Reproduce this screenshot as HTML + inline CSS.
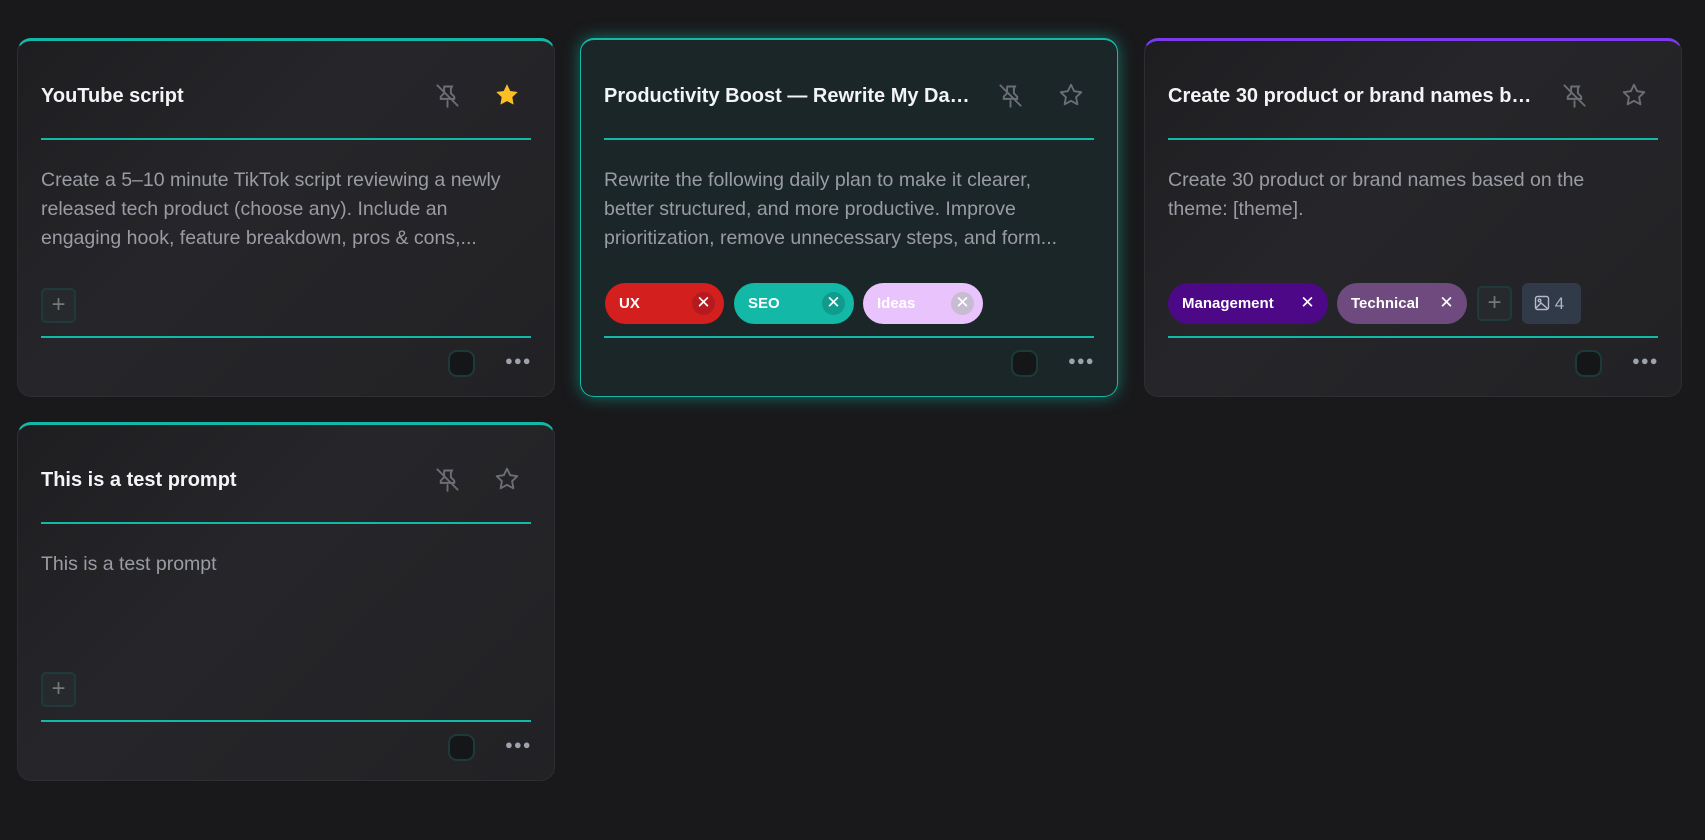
<!DOCTYPE html>
<html><head><meta charset="utf-8"><style>
*{box-sizing:border-box;margin:0;padding:0}
body{width:1705px;height:840px;background:#19191b;font-family:"Liberation Sans",sans-serif;position:relative;overflow:hidden}
.card{position:absolute;width:538px;height:359px;border-radius:14px;background:linear-gradient(135deg,#1e1e21 0%,#26262a 40%,#222225 100%);border:1px solid #2a2f31;border-top:3px solid #14b8a6}
.card.sel{background:#1a2628;border:1px solid #14b8a6;box-shadow:0 0 16px rgba(20,184,166,.55)}
.card.pur{border-top-color:#7c3aed}
.title{position:absolute;left:23px;top:44px;font-size:20px;font-weight:bold;color:#f3f4f6;width:370px;white-space:nowrap;overflow:hidden;text-overflow:ellipsis}
.pin{position:absolute;top:83px}
.hr{position:absolute;left:23px;right:23px;height:2px;background:#14b8a6}
.desc{position:absolute;left:23px;top:125px;width:470px;font-size:19.5px;line-height:29px;color:#9a9ca3}
.plus{position:absolute;width:35px;height:35px;border:2px solid #1f3a3b;border-radius:5px;background:#262a2d;color:#777;font-size:24px;line-height:29px;text-align:center;font-weight:300}
.chk{position:absolute;width:27px;height:27px;border:2px solid #1d3a3b;border-radius:9px;background:#141618}
.dots{position:absolute;color:#9ca3af;font-size:13px;letter-spacing:1px;font-weight:bold}
.tag{position:absolute;height:41px;border-radius:21px;color:#fff;font-size:15px;font-weight:bold;line-height:41px;padding-left:14px}
.tag .x{position:absolute;right:9px;top:9px;width:23px;height:23px;border-radius:50%;text-align:center;line-height:22px;font-weight:normal;font-size:17px}
</style></head><body>

<!-- Card 1 -->
<div class="card" style="left:17px;top:38px">
  <div class="title" style="top:44px">YouTube script</div>
  <svg class="pin" style="left:416px;top:41px" width="27" height="27" viewBox="0 0 24 24" fill="none" stroke="#6b6f75" stroke-width="1.7" stroke-linecap="round"><path d="M3 3l18 18M12 17v5M9 4h7l-1 2v4l3 3v2H6v-2l3-3V5"/></svg>
  <svg style="position:absolute;left:476px;top:41px" width="26" height="26" viewBox="0 0 24 24"><path d="M12 2l3 6.3 6.9.9-5 4.8 1.2 6.9L12 17.6 5.9 20.9 7.1 14l-5-4.8 6.9-.9z" fill="#fbbf24"/></svg>
  <div class="hr" style="top:97px"></div>
  <div class="desc">Create a 5–10 minute TikTok script reviewing a newly released tech product (choose any). Include an engaging hook, feature breakdown, pros &amp; cons,...</div>
  <div class="plus" style="left:23px;top:247px">+</div>
  <div class="hr" style="top:295px"></div>
  <div class="chk" style="left:430px;top:309px"></div>
  <div class="dots" style="left:487px;top:312px">●●●</div>
</div>

<!-- Card 2 -->
<div class="card sel" style="left:580px;top:38px;border-top:2px solid #14b8a6">
  <div class="title" style="top:45px">Productivity Boost — Rewrite My Daily Plan</div>
  <svg class="pin" style="left:416px;top:42px" width="27" height="27" viewBox="0 0 24 24" fill="none" stroke="#6b6f75" stroke-width="1.7" stroke-linecap="round"><path d="M3 3l18 18M12 17v5M9 4h7l-1 2v4l3 3v2H6v-2l3-3V5"/></svg>
  <svg style="position:absolute;left:477px;top:42px" width="26" height="26" viewBox="0 0 24 24" fill="none" stroke="#6b6f75" stroke-width="1.7" stroke-linejoin="round"><path d="M12 2.5l2.9 6 6.6.9-4.8 4.6 1.2 6.6L12 17.4 6.1 20.6l1.2-6.6-4.8-4.6 6.6-.9z"/></svg>
  <div class="hr" style="top:98px"></div>
  <div class="desc" style="top:126px">Rewrite the following daily plan to make it clearer, better structured, and more productive. Improve prioritization, remove unnecessary steps, and form...</div>
  <div class="tag" style="left:24px;top:243px;width:119px;background:#d41f1f">UX<span class="x" style="background:#b51a1e">✕</span></div>
  <div class="tag" style="left:153px;top:243px;width:120px;background:#14b8a6">SEO<span class="x" style="background:#109b8d">✕</span></div>
  <div class="tag" style="left:282px;top:243px;width:120px;background:#e9c3fb">Ideas<span class="x" style="background:#c7bcd2">✕</span></div>
  <div class="hr" style="top:296px"></div>
  <div class="chk" style="left:430px;top:310px"></div>
  <div class="dots" style="left:487px;top:313px">●●●</div>
</div>

<!-- Card 3 -->
<div class="card pur" style="left:1144px;top:38px">
  <div class="title" style="top:44px">Create 30 product or brand names based on the theme</div>
  <svg class="pin" style="left:416px;top:41px" width="27" height="27" viewBox="0 0 24 24" fill="none" stroke="#6b6f75" stroke-width="1.7" stroke-linecap="round"><path d="M3 3l18 18M12 17v5M9 4h7l-1 2v4l3 3v2H6v-2l3-3V5"/></svg>
  <svg style="position:absolute;left:476px;top:41px" width="26" height="26" viewBox="0 0 24 24" fill="none" stroke="#6b6f75" stroke-width="1.7" stroke-linejoin="round"><path d="M12 2.5l2.9 6 6.6.9-4.8 4.6 1.2 6.6L12 17.4 6.1 20.6l1.2-6.6-4.8-4.6 6.6-.9z"/></svg>
  <div class="hr" style="top:97px"></div>
  <div class="desc">Create 30 product or brand names based on the theme: [theme].</div>
  <div class="tag" style="left:23px;top:242px;width:160px;background:#4c0886">Management<span class="x">✕</span></div>
  <div class="tag" style="left:192px;top:242px;width:130px;background:#6e4a7e">Technical<span class="x">✕</span></div>
  <div class="plus" style="left:332px;top:245px">+</div>
  <div style="position:absolute;left:377px;top:242px;width:59px;height:41px;border-radius:6px;background:#303a48;color:#b0b6c0;font-size:17px;line-height:41px;padding-left:12px">
    <svg style="vertical-align:-2px" width="16" height="16" viewBox="0 0 16 16" fill="none" stroke="#b6b9c8" stroke-width="1.4"><rect x="1.5" y="1.5" width="13" height="13" rx="2"/><circle cx="5.5" cy="5.5" r="1.3"/><path d="M2 13l5-5 7 6"/></svg> 4</div>
  <div class="hr" style="top:295px"></div>
  <div class="chk" style="left:430px;top:309px"></div>
  <div class="dots" style="left:487px;top:312px">●●●</div>
</div>

<!-- Card 4 -->
<div class="card" style="left:17px;top:422px">
  <div class="title" style="top:44px">This is a test prompt</div>
  <svg class="pin" style="left:416px;top:41px" width="27" height="27" viewBox="0 0 24 24" fill="none" stroke="#6b6f75" stroke-width="1.7" stroke-linecap="round"><path d="M3 3l18 18M12 17v5M9 4h7l-1 2v4l3 3v2H6v-2l3-3V5"/></svg>
  <svg style="position:absolute;left:476px;top:41px" width="26" height="26" viewBox="0 0 24 24" fill="none" stroke="#6b6f75" stroke-width="1.7" stroke-linejoin="round"><path d="M12 2.5l2.9 6 6.6.9-4.8 4.6 1.2 6.6L12 17.4 6.1 20.6l1.2-6.6-4.8-4.6 6.6-.9z"/></svg>
  <div class="hr" style="top:97px"></div>
  <div class="desc">This is a test prompt</div>
  <div class="plus" style="left:23px;top:247px">+</div>
  <div class="hr" style="top:295px"></div>
  <div class="chk" style="left:430px;top:309px"></div>
  <div class="dots" style="left:487px;top:312px">●●●</div>
</div>
</body></html>
